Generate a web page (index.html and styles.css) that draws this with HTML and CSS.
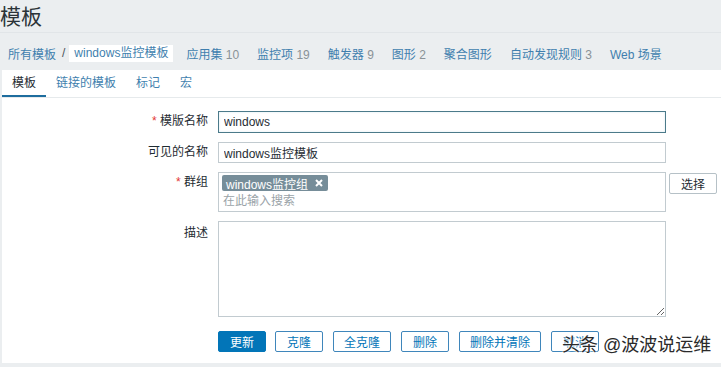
FILE: index.html
```html
<!DOCTYPE html>
<html lang="zh-CN">

<head>
    <meta charset="UTF-8">
    <title>模板</title>
    <link rel="stylesheet" href="styles.css">
</head>

<body>
    <header class="page-title">
        <h1>模板</h1>
    </header>

    <nav class="breadcrumbs">
        <a class="crumb first" href="#">所有模板</a>
        <span class="sep">/</span>
        <span class="crumb-current">windows监控模板</span>
        <a class="crumb" href="#">应用集 <span class="count">10</span></a>
        <a class="crumb" href="#">监控项 <span class="count">19</span></a>
        <a class="crumb" href="#">触发器 <span class="count">9</span></a>
        <a class="crumb" href="#">图形 <span class="count">2</span></a>
        <a class="crumb" href="#">聚合图形</a>
        <a class="crumb" href="#">自动发现规则 <span class="count">3</span></a>
        <a class="crumb" href="#">Web 场景</a>
    </nav>

    <main class="panel">
        <ul class="tabs">
            <li class="tab active">模板</li>
            <li class="tab">链接的模板</li>
            <li class="tab">标记</li>
            <li class="tab">宏</li>
        </ul>

        <form class="form" onsubmit="event.preventDefault();">
            <div class="row">
                <label class="label" for="host"><span class="req">*</span> 模版名称</label>
                <input class="field focused" type="text" id="host" value="windows">
            </div>

            <div class="row">
                <label class="label" for="visible">可见的名称</label>
                <input class="field" type="text" id="visible" value="windows监控模板">
            </div>

            <div class="row">
                <label class="label"><span class="req">*</span> 群组</label>
                <div class="multiselect">
                    <span class="tag">windows监控组
                        <svg class="tag-x" width="8" height="8" viewBox="0 0 8 8">
                            <path d="M1 1L7 7M7 1L1 7" stroke="#fff" stroke-width="2" />
                        </svg>
                    </span>
                    <div class="placeholder">在此输入搜索</div>
                </div>
                <button type="button" class="btn-select">选择</button>
            </div>

            <div class="row">
                <label class="label label-top" for="desc">描述</label>
                <textarea class="field area" id="desc"></textarea>
            </div>

            <div class="buttons">
                <button type="submit" class="btn primary">更新</button>
                <button type="button" class="btn">克隆</button>
                <button type="button" class="btn">全克隆</button>
                <button type="button" class="btn">删除</button>
                <button type="button" class="btn">删除并清除</button>
                <button type="button" class="btn">取消</button>
            </div>
        </form>
    </main>

    <div class="watermark">头条 @波波说运维</div>
</body>

</html>
```

FILE: styles.css
```css
body {
    font-family: "Liberation Sans", "Noto Sans CJK SC", sans-serif;
    font-size: 12px;
    margin: 0;
    padding: 0;
    background-color: #ebeef0;
    color: #1f2c33;
    height: 367px;
    overflow: hidden;
    position: relative;
}

.page-title {
    height: 33px;
    border-bottom: 1px solid #e1e5e8;
    box-sizing: border-box;
}

.page-title h1 {
    margin: 0;
    padding: 4px 0 0 0;
    font-size: 21px;
    font-weight: normal;
    line-height: 26px;
    color: #2b3338;
}

.breadcrumbs {
    height: 37px;
    display: flex;
    align-items: center;
    padding-left: 8px;
    padding-top: 3px;
    box-sizing: border-box;
}

.crumb {
    color: #3f7fae;
    text-decoration: none;
    margin-right: 18px;
    white-space: nowrap;
}

.crumb.first {
    margin-right: 0;
}

.count {
    color: #8a9297;
}

.sep {
    color: #4a5459;
    margin: 0 4px 0 6px;
}

.crumb-current {
    background-color: #fff;
    color: #3f7fae;
    padding: 1px 5px 2px 5px;
    margin-right: 13px;
    line-height: 14px;
}

.panel {
    background-color: #fff;
    margin-left: 2px;
    height: 293px;
}

.tabs {
    list-style: none;
    margin: 0;
    padding: 0;
    display: flex;
    height: 28px;
    border-bottom: 1px solid #e6eaec;
    box-sizing: border-box;
}

.tab {
    padding: 2px 10px 0 10px;
    line-height: 23px;
    color: #3f7fae;
    border-bottom: 2px solid transparent;
}

.tab.active {
    color: #1f2c33;
    border-bottom-color: #1e6d9e;
}

.form {
    padding-top: 13px;
}

.row {
    display: flex;
    align-items: flex-start;
    margin-bottom: 9px;
}

.label {
    width: 216px;
    padding-right: 10px;
    box-sizing: border-box;
    text-align: right;
    line-height: 21px;
    color: #1f2c33;
}

.label-top {
    padding-top: 2px;
}

.req {
    color: #e33734;
}

.field {
    width: 448px;
    height: 21px;
    box-sizing: border-box;
    border: 1px solid #c2cbd0;
    padding: 0 5px;
    font-family: inherit;
    font-size: 12px;
    color: #1f2c33;
    margin: 0;
    outline: none;
    border-radius: 0;
}

.field.focused {
    border-color: #4b7a8a;
    height: 22px;
    box-shadow: inset 0 0 2px rgba(120, 180, 210, 0.3);
}

.multiselect {
    width: 448px;
    height: 40px;
    box-sizing: border-box;
    border: 1px solid #c2cbd0;
    padding: 2px 3px;
}

.tag {
    display: inline-flex;
    align-items: center;
    background-color: #768d99;
    color: #fff;
    height: 16px;
    padding: 0 5px 0 4px;
    border-radius: 2px;
}

.tag-x {
    margin-left: 7px;
}

.placeholder {
    color: #9aa3a8;
    line-height: 16px;
    padding-left: 1px;
    margin-top: 1px;
}

.btn-select {
    margin-left: 3px;
    margin-top: 1px;
    width: 48px;
    height: 21px;
    background-color: #fff;
    border: 1px solid #b6c1c7;
    border-radius: 2px;
    color: #1f2c33;
    font-family: inherit;
    font-size: 12px;
    padding: 0;
}

.area {
    height: 96px;
    resize: both;
    padding: 3px 5px;
}

.buttons {
    display: flex;
    padding-left: 216px;
    margin-top: 14px;
}

.btn {
    height: 21px;
    padding: 0 10px;
    min-width: 48px;
    margin-right: 10px;
    background-color: #fff;
    border: 1px solid #3f86bb;
    border-radius: 2px;
    color: #0275b8;
    font-family: inherit;
    font-size: 12px;
    cursor: pointer;
}

.btn.primary {
    background-color: #0275b8;
    border-color: #0275b8;
    color: #fff;
    margin-right: 9px;
}

.watermark {
    position: absolute;
    left: 562px;
    top: 333px;
    font-size: 18px;
    line-height: 24px;
    color: #2a2a2a;
    white-space: nowrap;
    text-shadow: 0 0 2px #fff, 0 0 2px #fff, 0 0 3px #fff;
}
```
